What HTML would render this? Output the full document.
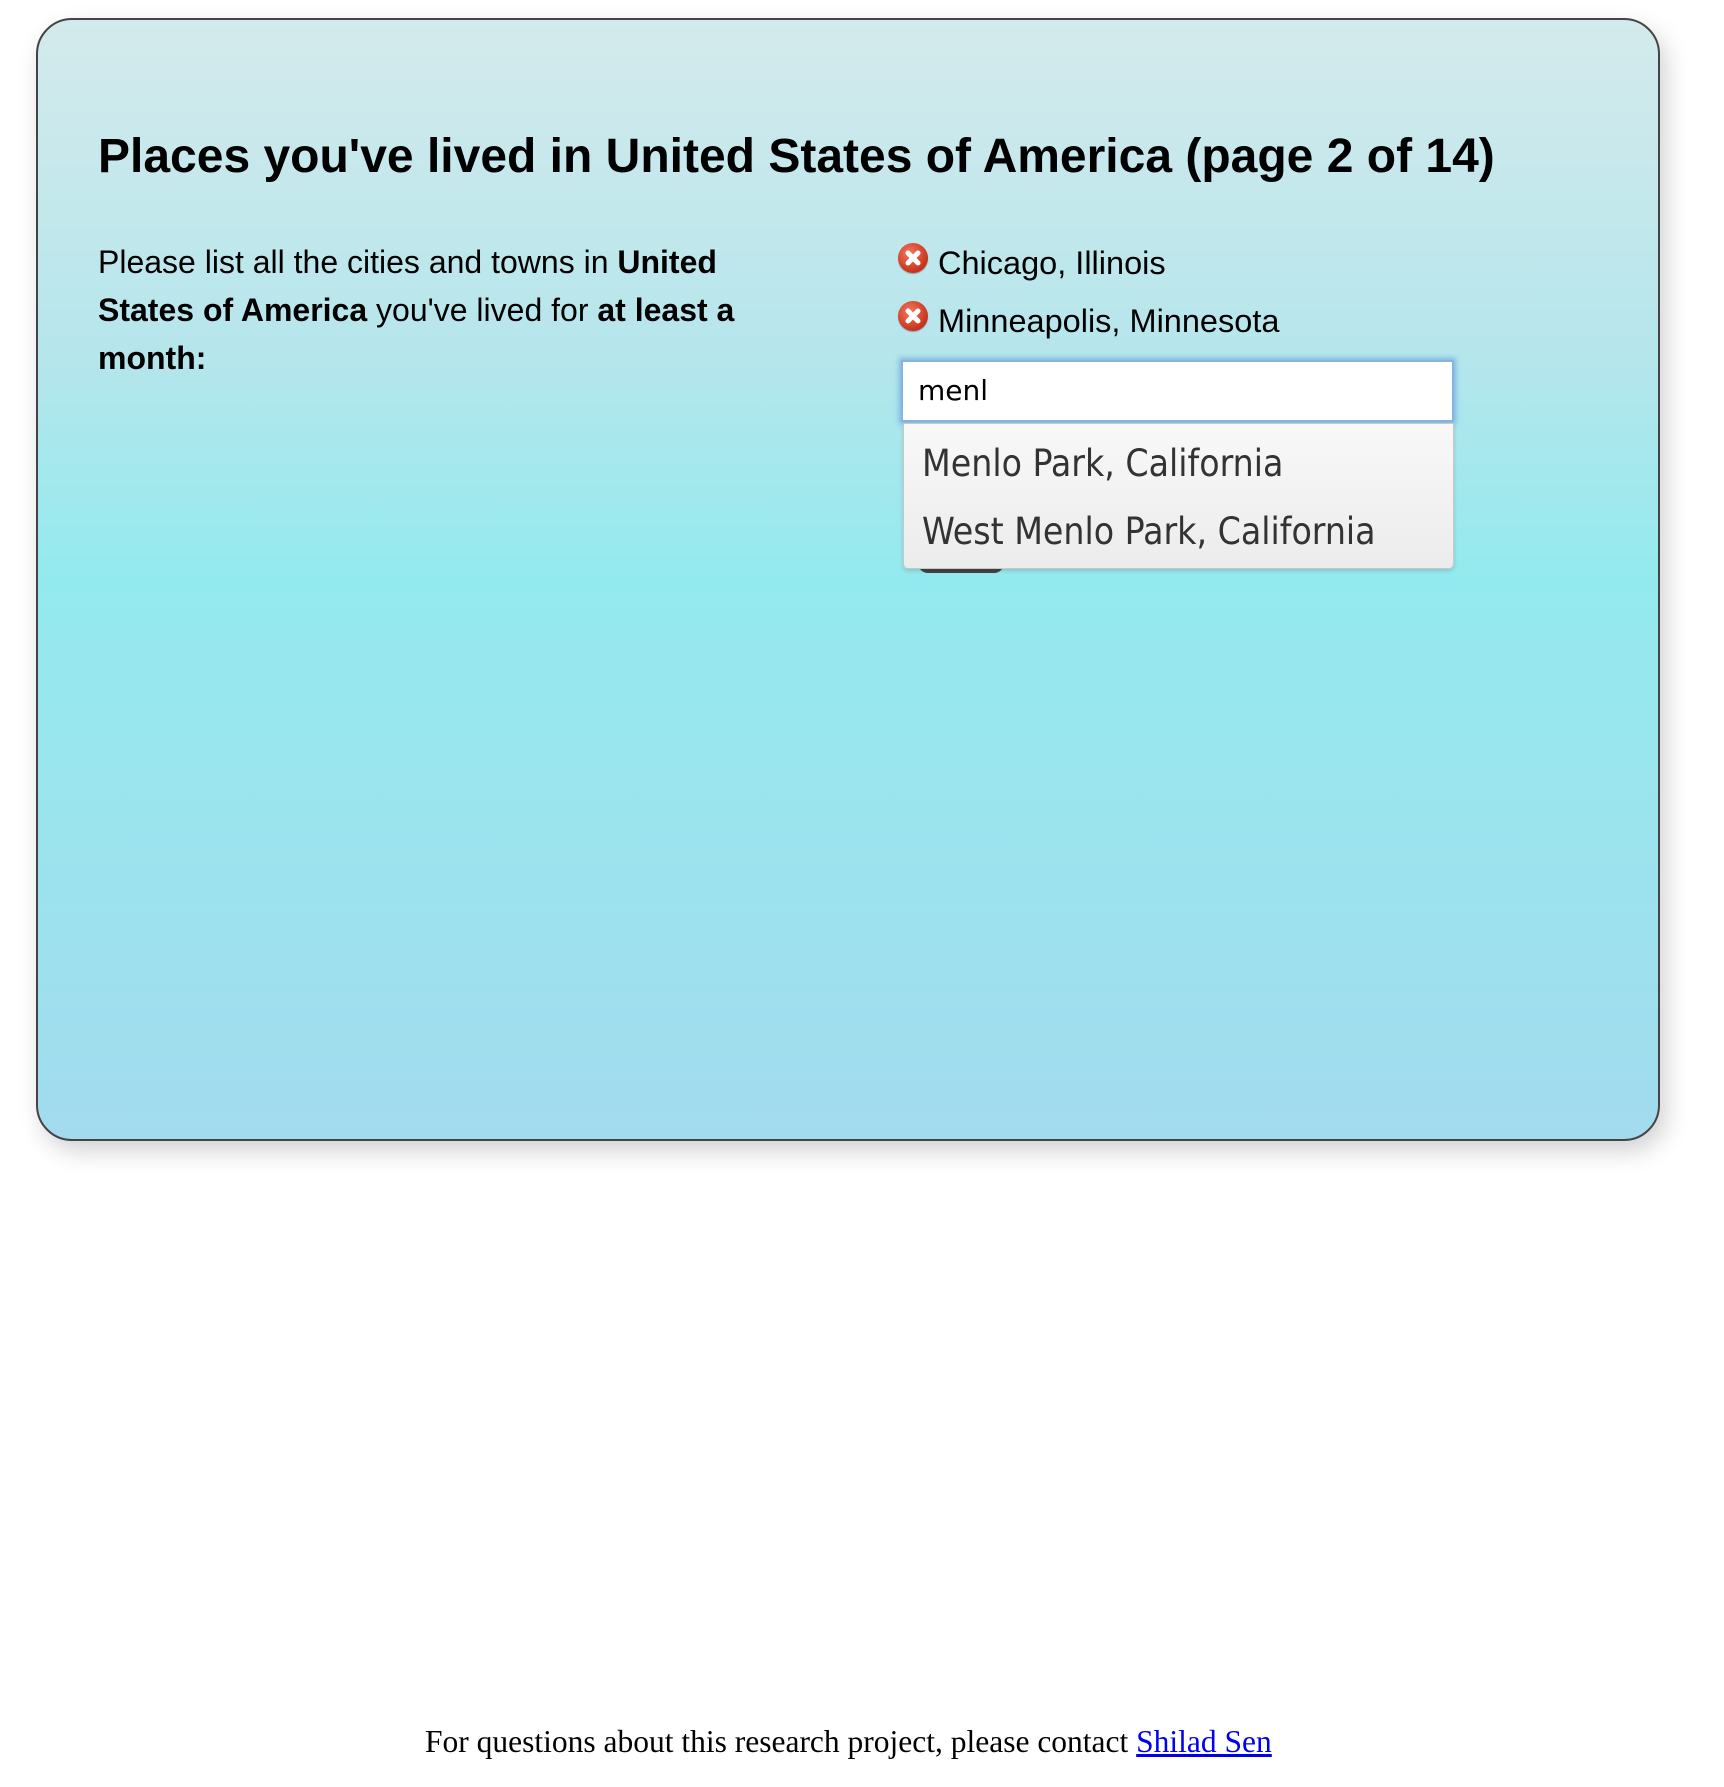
<!DOCTYPE html>
<html><head><meta charset="utf-8"><style>
html,body{margin:0;padding:0;background:#fff;width:1724px;height:1787px;overflow:hidden;position:relative}
.card{position:absolute;left:36px;top:18px;width:1620px;height:1119px;border:2px solid #444;border-radius:36px;
background:linear-gradient(to bottom,#d4eaec 0%,#b5e6ec 30%,#93eaee 50%,#99e6ee 65%,#a2dbee 100%);
box-shadow:6px 10px 24px rgba(0,0,0,0.18)}
h1{position:absolute;left:98px;top:133px;margin:0;font:bold 48px/1 "Liberation Sans",Arial,sans-serif;white-space:nowrap}
.body{position:absolute;left:98px;top:238px;width:680px;font:32px/48px "Liberation Sans",Arial,sans-serif}
.ic{position:absolute;width:30px;height:30px;border-radius:50%;background:radial-gradient(circle at 40% 35%,#f27a5e,#c8321c 70%,#9e2412);box-shadow:0 1px 1px rgba(0,0,0,.3)}
.ic svg{position:absolute;left:0;top:0}
.item{position:absolute;left:938px;font:32.5px/1 "Liberation Sans",Arial,sans-serif}
.inp{position:absolute;left:901px;top:360px;width:549px;height:58px;background:#fff;border:2px solid #86b4df;box-shadow:0 0 5px 2px rgba(90,150,220,.6)}
.inp span{position:absolute;left:15px;top:15px;font:28px/1 "DejaVu Sans","Liberation Sans",sans-serif;color:#000}
.btn{position:absolute;left:918px;top:548px;width:86px;height:25px;background:#444;border-radius:10px}
.dd{position:absolute;left:903px;top:423px;width:549px;height:144px;border:1px solid #c8c8c8;border-radius:0 0 5px 5px;background:linear-gradient(#f8f8f8,#ececec);box-shadow:0 2px 4px rgba(0,0,0,.15)}
.dd div{position:absolute;left:18px;font:37px/1 "DejaVu Sans Condensed","DejaVu Sans",sans-serif;color:#333;white-space:nowrap}
.foot{position:absolute;left:425px;top:1726px;font:31.5px/1 "Liberation Serif","Times New Roman",serif;white-space:nowrap}
.foot a{color:#0000ee;text-decoration:underline}
</style></head><body>
<div class="card"></div>
<h1>Places you've lived in United States of America (page 2 of 14)</h1>
<div class="body">Please list all the cities and towns in <b>United States of America</b> you've lived for <b>at least a month:</b></div>

<div class="ic" style="left:898px;top:243px"><svg width="30" height="30" viewBox="0 0 30 30"><path d="M10 10L20 20M20 10L10 20" stroke="#fff" stroke-width="5" stroke-linecap="round"/></svg></div>
<div class="item" style="top:247px">Chicago, Illinois</div>
<div class="ic" style="left:898px;top:301px"><svg width="30" height="30" viewBox="0 0 30 30"><path d="M10 10L20 20M20 10L10 20" stroke="#fff" stroke-width="5" stroke-linecap="round"/></svg></div>
<div class="item" style="top:305px">Minneapolis, Minnesota</div>

<div class="btn"></div>
<div class="inp"><span>menl</span></div>
<div class="dd">
<div style="top:21px">Menlo Park, California</div>
<div style="top:89px">West Menlo Park, California</div>
</div>

<div class="foot">For questions about this research project, please contact <a>Shilad Sen</a></div>
</body></html>
